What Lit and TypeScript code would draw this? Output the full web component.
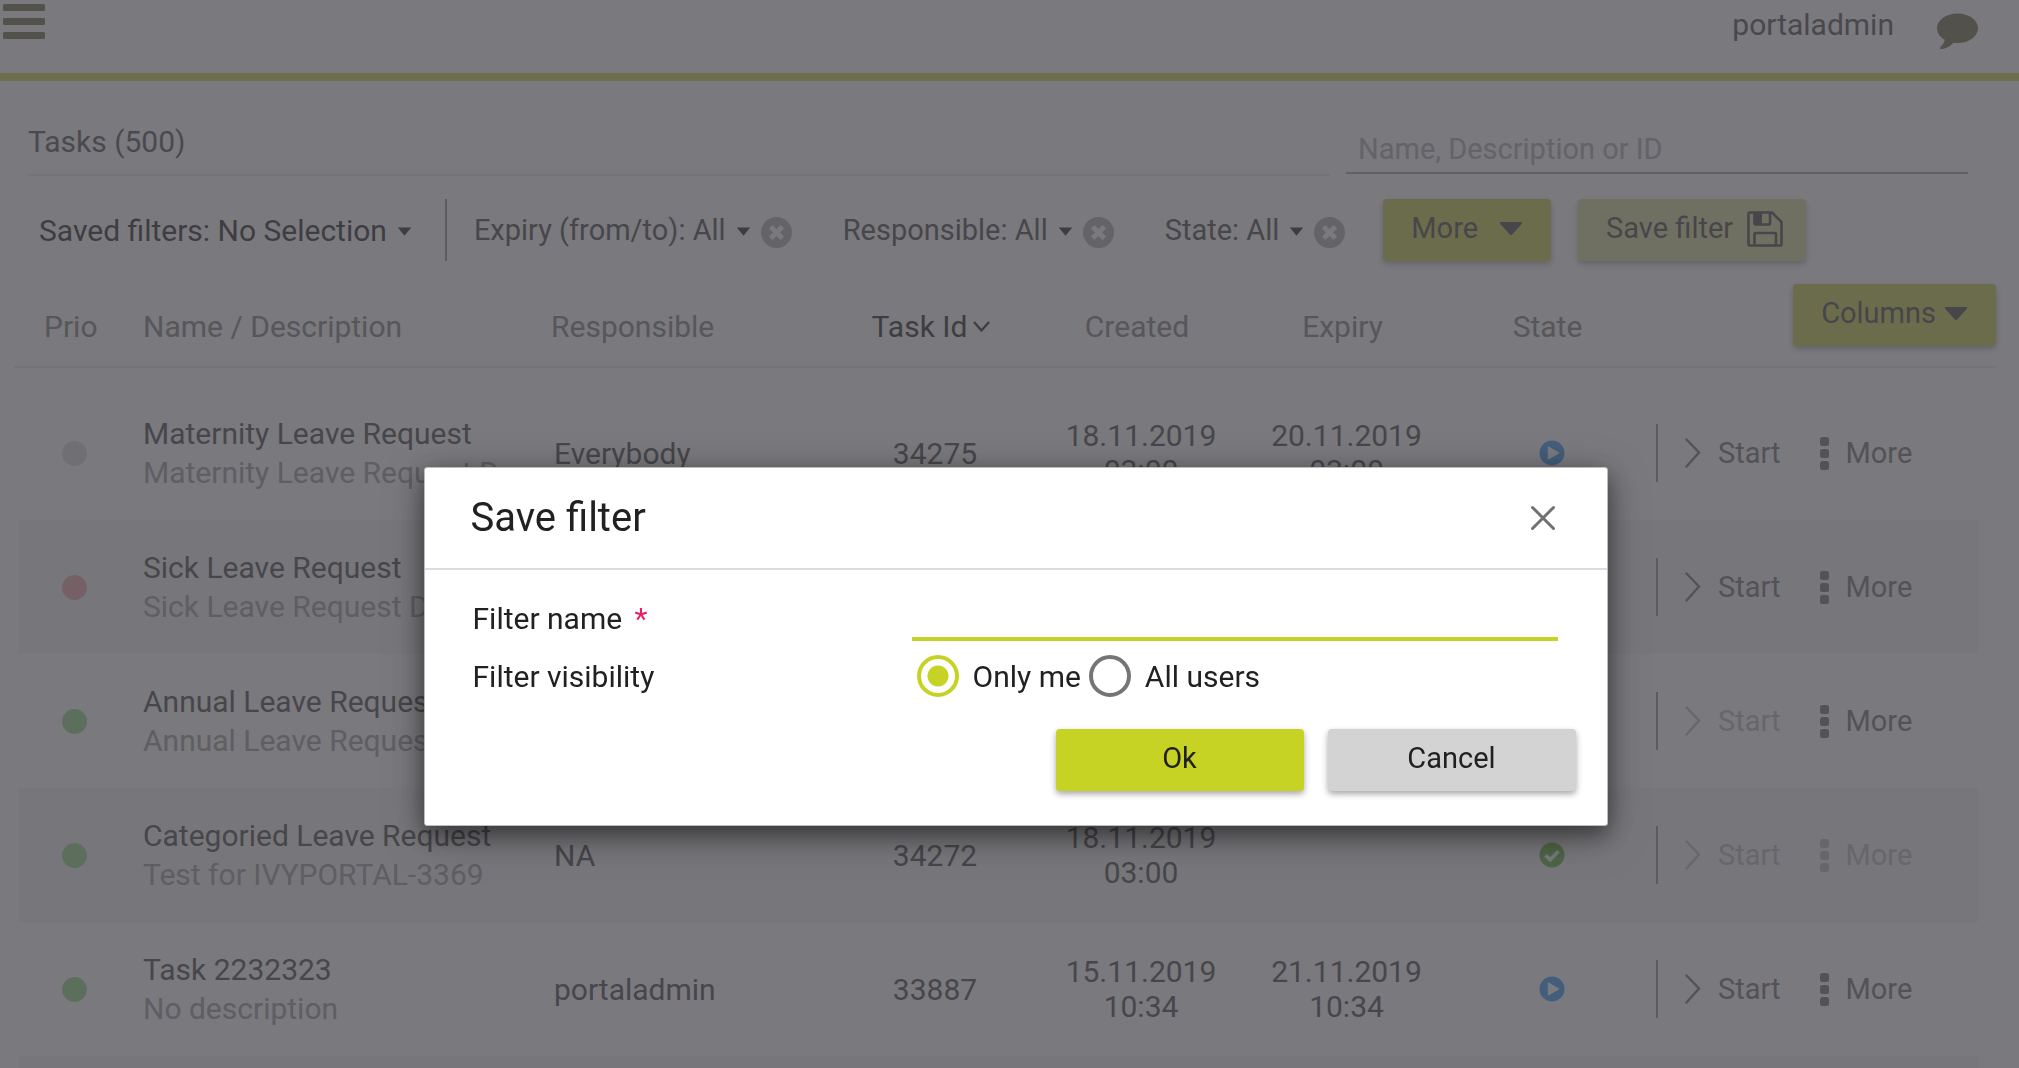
import { LitElement, html, css, svg, nothing } from "lit";
import { customElement, property, state } from "lit/decorators.js";
import { classMap } from "lit/directives/class-map.js";

interface Task {
  prio: "low" | "high" | "normal";
  name: string;
  description: string;
  responsible: string;
  id: string;
  created: [string, string];
  expiry?: [string, string];
  status: "open" | "done";
  canStart: boolean;
  canMore: boolean;
}

const TASKS: Task[] = [
  {
    prio: "low",
    name: "Maternity Leave Request",
    description: "Maternity Leave Request Description",
    responsible: "Everybody",
    id: "34275",
    created: ["18.11.2019", "03:00"],
    expiry: ["20.11.2019", "03:00"],
    status: "open",
    canStart: true,
    canMore: true,
  },
  {
    prio: "high",
    name: "Sick Leave Request",
    description: "Sick Leave Request Description",
    responsible: "Everybody",
    id: "34274",
    created: ["18.11.2019", "03:00"],
    expiry: ["20.11.2019", "03:00"],
    status: "open",
    canStart: true,
    canMore: true,
  },
  {
    prio: "normal",
    name: "Annual Leave Request",
    description: "Annual Leave Request Description",
    responsible: "Everybody",
    id: "34273",
    created: ["18.11.2019", "03:00"],
    expiry: ["20.11.2019", "03:00"],
    status: "open",
    canStart: false,
    canMore: true,
  },
  {
    prio: "normal",
    name: "Categoried Leave Request",
    description: "Test for IVYPORTAL-3369",
    responsible: "NA",
    id: "34272",
    created: ["18.11.2019", "03:00"],
    status: "done",
    canStart: false,
    canMore: false,
  },
  {
    prio: "normal",
    name: "Task 2232323",
    description: "No description",
    responsible: "portaladmin",
    id: "33887",
    created: ["15.11.2019", "10:34"],
    expiry: ["21.11.2019", "10:34"],
    status: "open",
    canStart: true,
    canMore: true,
  },
];

const FILTERS = ["Expiry (from/to): All", "Responsible: All", "State: All"];

const smallCaret = html`<svg class="caret" width="15" height="9" viewBox="0 0 15 9" aria-hidden="true">
  <path d="M0.8 0.5h13.4L7.5 8.8z" fill="currentColor" />
</svg>`;

const bigCaret = html`<svg width="24" height="15" viewBox="0 0 24 15" aria-hidden="true">
  <path d="M2 1h20c1 0 1.500 1 0.800 1.800l-9.600 10.800c-0.700 0.700-1.700 0.700-2.400 0L1.200 2.800C0.500 2 1 1 2 1z" fill="currentColor" />
</svg>`;

const floppy = html`<svg width="36" height="36" viewBox="0 0 36 36" fill="none" stroke="currentColor" stroke-width="2.600" aria-hidden="true">
  <path d="M2.500 1.500H25L34.500 11V33.500a1 1 0 0 1-1 1H2.500a1 1 0 0 1-1-1V2.500a1 1 0 0 1 1-1z" stroke-linejoin="round" />
  <path d="M7.500 2v10.500a1 1 0 0 0 1 1H22a1 1 0 0 0 1-1V2" />
  <path d="M7.500 2h7.500v12H7.500z" fill="currentColor" stroke="none" />
  <path d="M7.500 34V23a1 1 0 0 1 1-1H28a1 1 0 0 1 1 1V34" />
</svg>`;

const stateIcon = (kind: Task["status"]) => html`<svg
  class=${classMap({ status: true, [kind]: true })}
  width="26"
  height="26"
  viewBox="0 0 26 26"
  role="img"
  aria-label=${kind}
>
  <circle cx="13" cy="13" r="12.500" fill="currentColor" />
  ${kind === "open"
    ? svg`<path d="M9.300 6.800v12.400l10.700-6.200z" fill="#fff" stroke="#fff" stroke-linejoin="round" />`
    : svg`<path d="M6.500 13.200l4.600 4.600 8.400-8.600" fill="none" stroke="#fff" stroke-width="3.600" />`}
</svg>`;

@customElement("portal-task-row-actions")
export class TaskRowActions extends LitElement {
  @property({ type: Boolean }) start = false;
  @property({ type: Boolean }) more = false;

  static styles = css`
    :host {
      display: block;
    }
    .actions {
      display: flex;
      align-items: center;
      height: 58px;
      margin-left: 2px;
      padding-left: 27px;
      border-left: 2px solid #9c9c9c;
    }
    button {
      display: flex;
      align-items: center;
      padding: 0;
      border: 0;
      background: none;
      color: #7c7c7c;
      font: 29px/39px Roboto, sans-serif;
    }
    button:disabled {
      color: #c0c0c0;
    }
    .start {
      gap: 17px;
      margin-right: 39px;
    }
    .more {
      gap: 17px;
    }
  `;

  render() {
    return html`<div class="actions">
      <button class="start" type="button" ?disabled=${!this.start}>
        <svg width="16" height="30" viewBox="0 0 16 30" fill="none" stroke="currentColor" stroke-width="2.400" aria-hidden="true">
          <path d="M1.500 1.500L14 14.500L1.500 28.500" stroke-linecap="round" />
        </svg>
        Start
      </button>
      <button class="more" type="button" ?disabled=${!this.more}>
        <svg width="9" height="33" viewBox="0 0 9 33" fill="currentColor" aria-hidden="true">
          <rect width="9" height="9" rx="2.500" />
          <rect y="12" width="9" height="9" rx="2.500" />
          <rect y="24" width="9" height="9" rx="2.500" />
        </svg>
        More
      </button>
    </div>`;
  }
}

@customElement("portal-save-filter-dialog")
export class SaveFilterDialog extends LitElement {
  @state() private visibility = "me";

  static styles = css`
    :host {
      display: block;
      box-sizing: border-box;
      width: 1184px;
      max-width: 100%;
    }
    .dialog {
      border: 1px solid #bdbdbf;
      border-radius: 3px;
      background: #fff;
      color: #212121;
      font: 30px/39px Roboto, sans-serif;
      box-shadow: 0 10px 40px rgba(0, 0, 0, 0.35), 0 8px 20px rgba(0, 0, 0, 0.35);
    }
    header {
      display: flex;
      align-items: center;
      justify-content: space-between;
      height: 100px;
      padding: 0 51px 0 46px;
      border-bottom: 2px solid #dcdcdc;
    }
    h2 {
      margin: 0;
      font-size: 40px;
      font-weight: 400;
      line-height: 48px;
    }
    .close {
      display: flex;
      padding: 0;
      border: 0;
      background: none;
      color: #707070;
    }
    form {
      padding: 25px 31px 34px 48px;
    }
    .fields {
      display: grid;
      grid-template-columns: 439px 1fr;
      row-gap: 14px;
      align-items: center;
      margin-right: 18px;
    }
    .required {
      margin-left: 5px;
      color: #e91e63;
    }
    .name {
      box-sizing: border-box;
      width: 100%;
      height: 46px;
      padding: 0 4px;
      border: 0;
      border-bottom: 4px solid #c6d325;
      border-radius: 0;
      outline: none;
      background: none;
      color: inherit;
      font: inherit;
    }
    .choices {
      display: flex;
      align-items: center;
      gap: 8px;
      padding-left: 5px;
    }
    .choice {
      display: flex;
      align-items: center;
      gap: 14px;
    }
    .radio {
      appearance: none;
      box-sizing: border-box;
      width: 42px;
      height: 42px;
      margin: 0;
      border: 4px solid #757575;
      border-radius: 50%;
      background: #fff;
    }
    .radio:checked {
      border-color: #c6d325;
      background: radial-gradient(circle, #c6d325 10px, #fff 11px);
    }
    .buttons {
      display: flex;
      justify-content: flex-end;
      gap: 24px;
      margin-top: 32px;
    }
    .button {
      width: 248px;
      height: 62px;
      padding: 0 0 3px;
      border: 0;
      border-radius: 4px;
      background: #d3d3d3;
      color: #212121;
      font: 29px/39px Roboto, sans-serif;
      box-shadow: 0 3px 6px rgba(0, 0, 0, 0.35);
    }
    .primary {
      background: #c6d325;
    }
  `;

  private choice(value: string, label: string) {
    return html`<label class="choice">
      <input
        class="radio"
        type="radio"
        name="visibility"
        .value=${value}
        .checked=${this.visibility === value}
        @change=${() => (this.visibility = value)}
      />
      ${label}
    </label>`;
  }

  render() {
    return html`<section class="dialog" role="dialog" aria-modal="true" aria-labelledby="title">
      <header>
        <h2 id="title">Save filter</h2>
        <button class="close" type="button" aria-label="Close">
          <svg width="26" height="26" viewBox="0 0 26 26" fill="none" stroke="currentColor" stroke-width="3" stroke-linecap="round" aria-hidden="true">
            <path d="M2.500 2.500l21 21M23.500 2.500l-21 21" />
          </svg>
        </button>
      </header>
      <form @submit=${(e: Event) => e.preventDefault()}>
        <div class="fields">
          <label for="name">Filter name <span class="required">*</span></label>
          <input id="name" class="name" type="text" required />
          <span id="visibility">Filter visibility</span>
          <div class="choices" role="radiogroup" aria-labelledby="visibility">
            ${this.choice("me", "Only me")}${this.choice("all", "All users")}
          </div>
        </div>
        <div class="buttons">
          <button class="button primary" type="submit">Ok</button>
          <button class="button" type="button">Cancel</button>
        </div>
      </form>
    </section>`;
  }
}

@customElement("app-root")
export class AppRoot extends LitElement {
  static styles = css`
    :host {
      display: block;
      height: 100vh;
      overflow: hidden;
      background: #fff;
      color: #545454;
      font: 30px/39px Roboto, sans-serif;
    }
    button {
      padding: 0;
      border: 0;
      background: none;
      color: inherit;
      font: inherit;
    }
    .topbar {
      display: flex;
      justify-content: space-between;
      align-items: flex-start;
      height: 73px;
      border-bottom: 8px solid #d2da62;
      color: #78785a;
    }
    .menu {
      display: flex;
      padding: 4px 0 0 3px;
    }
    .account {
      display: flex;
      gap: 43px;
      padding: 5px 41px 0 0;
    }
    .user {
      color: #5c5c5c;
      text-decoration: none;
    }
    .chat {
      display: flex;
      padding-top: 8px;
    }
    .heading {
      display: grid;
      grid-template-columns: 1302fr 622fr;
      gap: 16px;
      padding: 41px 51px 0 28px;
    }
    h1 {
      margin: 0;
      padding-bottom: 13px;
      border-bottom: 2px solid #eaeaea;
      color: #606060;
      font-size: 30px;
      font-weight: 400;
    }
    .search {
      box-sizing: border-box;
      align-self: end;
      width: 100%;
      height: 46px;
      margin-bottom: 2px;
      padding: 0 12px 2px;
      border: 0;
      border-bottom: 2px solid #acacac;
      border-radius: 0;
      outline: none;
      background: none;
      color: inherit;
      font: 29px/39px Roboto, sans-serif;
    }
    .search::placeholder {
      color: #b4b4b4;
      opacity: 1;
    }
    .filters {
      display: flex;
      align-items: center;
      height: 62px;
      padding: 23px 0 0 39px;
      font-size: 29px;
    }
    .filter {
      display: flex;
      align-items: center;
      gap: 10px;
      white-space: nowrap;
    }
    .caret {
      margin-top: 3px;
      color: #383838;
    }
    .saved {
      padding-right: 33px;
      color: #383838;
      font-size: 30px;
    }
    .chips {
      display: flex;
      align-items: center;
      gap: 51px;
      height: 62px;
      padding: 0 38px 0 27px;
      border-left: 2px solid #9c9c9c;
    }
    .chip {
      display: flex;
      align-items: center;
      gap: 10px;
    }
    .clear {
      display: flex;
      padding-top: 5px;
      color: #b4b4b4;
    }
    .button {
      display: flex;
      align-items: center;
      height: 62px;
      padding: 0 28px 3px;
      border-radius: 4px;
      background: #ccd45c;
      color: #545454;
      font-size: 29px;
      box-shadow: 0 3px 6px rgba(0, 0, 0, 0.3);
    }
    .more {
      gap: 21px;
    }
    .save {
      gap: 14px;
      margin-left: 27px;
      padding-right: 23px;
      background: #dce2a6;
    }
    .columns {
      gap: 8px;
      margin-left: auto;
    }
    .tasks {
      padding: 10px 23px 0 14px;
    }
    table {
      width: 100%;
      border-collapse: separate;
      border-spacing: 0;
      table-layout: fixed;
    }
    .c-prio {
      width: 129px;
    }
    .c-responsible {
      width: 281px;
    }
    .c-id,
    .c-created {
      width: 206px;
    }
    .c-expiry,
    .c-state {
      width: 205px;
    }
    .c-actions {
      width: 342px;
    }
    th {
      height: 75px;
      padding: 0 0 20px;
      border-bottom: 2px solid #eaeaea;
      color: #8a8a8a;
      font-weight: 400;
      text-align: left;
      vertical-align: bottom;
    }
    th.prio {
      padding-left: 30px;
    }
    th.center {
      padding-right: 8px;
    }
    .center {
      text-align: center;
    }
    .sort {
      color: #383838;
    }
    .sort svg {
      margin-left: 6px;
    }
    tbody::before {
      content: "";
      display: table-row;
      height: 18px;
    }
    tbody tr:nth-child(even) {
      background: linear-gradient(#f6f6f6, #f6f6f6) no-repeat 4px 0 / calc(100% - 22px) 100%;
    }
    td {
      height: 134px;
      padding: 0;
      vertical-align: middle;
    }
    td.prio {
      padding-left: 48px;
    }
    .dot {
      display: block;
      width: 25px;
      height: 25px;
      border-radius: 50%;
    }
    .low {
      background: #dedede;
    }
    .high {
      background: #eeb0b0;
    }
    .normal {
      background: #9cdc94;
    }
    .name,
    .description {
      overflow: hidden;
      margin-right: 31px;
      text-overflow: ellipsis;
      white-space: nowrap;
    }
    .description {
      color: #a4a4a4;
    }
    td.responsible {
      padding-left: 3px;
    }
    .date {
      line-height: 35px;
    }
    .status {
      display: block;
      margin: 0 auto;
    }
    .open {
      color: #48a4f8;
    }
    .done {
      color: #70bc4c;
    }
    .overlay {
      position: fixed;
      inset: 0;
      display: flex;
      align-items: flex-start;
      justify-content: center;
      padding: 467px 0 0 12px;
      background: rgba(66, 64, 70, 0.7);
    }
  `;

  private row(t: Task) {
    return html`<tr>
      <td class="prio"><span class=${classMap({ dot: true, [t.prio]: true })}></span></td>
      <td>
        <div class="name">${t.name}</div>
        <div class="description">${t.description}</div>
      </td>
      <td class="responsible">${t.responsible}</td>
      <td class="center">${t.id}</td>
      <td class="center date">${t.created[0]}<br />${t.created[1]}</td>
      <td class="center date">${t.expiry ? html`${t.expiry[0]}<br />${t.expiry[1]}` : nothing}</td>
      <td>${stateIcon(t.status)}</td>
      <td>
        <portal-task-row-actions ?start=${t.canStart} ?more=${t.canMore}></portal-task-row-actions>
      </td>
    </tr>`;
  }

  render() {
    return html`
      <header class="topbar">
        <button class="menu" type="button" aria-label="Menu">
          <svg width="42" height="35" viewBox="0 0 42 35" fill="currentColor" aria-hidden="true">
            <rect width="42" height="7" rx="1.500" />
            <rect y="14" width="42" height="7" rx="1.500" />
            <rect y="28" width="42" height="7" rx="1.500" />
          </svg>
        </button>
        <div class="account">
          <a class="user" href="#">portaladmin</a>
          <button class="chat" type="button" aria-label="Chat">
            <svg width="41" height="37" viewBox="0 0 41 37" fill="currentColor" aria-hidden="true">
              <path d="M20.500 0.500C31.800 0.500 41 7 41 15.200S31.800 30 20.500 30c-1.400 0-2.700-0.100-4-0.300C13.500 33 9 35.800 4.500 36c-1.700 0.100-2-1-1.200-1.800C5.500 32 7 30 7.800 26.700 3 24 0 19.800 0 15.200 0 7 9.200 0.500 20.500 0.500z" />
            </svg>
          </button>
        </div>
      </header>
      <main>
        <div class="heading">
          <h1>Tasks (500)</h1>
          <input class="search" type="search" aria-label="Search tasks" placeholder="Name, Description or ID" />
        </div>
        <div class="filters">
          <button class="filter saved" type="button">Saved filters: No Selection ${smallCaret}</button>
          <div class="chips">
            ${FILTERS.map(
              (label) => html`<div class="chip">
                <button class="filter" type="button">${label} ${smallCaret}</button>
                <button class="clear" type="button" aria-label="Remove filter">
                  <svg width="31" height="31" viewBox="0 0 31 31" aria-hidden="true">
                    <circle cx="15.500" cy="15.500" r="15.500" fill="currentColor" />
                    <path d="M9.700 9.700l11.600 11.600M21.300 9.700L9.700 21.300" stroke="#fff" stroke-width="5" />
                  </svg>
                </button>
              </div>`,
            )}
          </div>
          <button class="button more" type="button">More ${bigCaret}</button>
          <button class="button save" type="button">Save filter ${floppy}</button>
        </div>
        <section class="tasks">
          <table>
            <colgroup>
              <col class="c-prio" />
              <col />
              <col class="c-responsible" />
              <col class="c-id" />
              <col class="c-created" />
              <col class="c-expiry" />
              <col class="c-state" />
              <col class="c-actions" />
            </colgroup>
            <thead>
              <tr>
                <th class="prio">Prio</th>
                <th>Name / Description</th>
                <th>Responsible</th>
                <th class="center">
                  <button class="sort" type="button">Task Id<svg width="17" height="16" viewBox="0 0 17 16" fill="none" stroke="currentColor" stroke-width="2.400" aria-hidden="true">
                      <path d="M1 1l7.500 8.500L16 1" />
                    </svg></button>
                </th>
                <th class="center">Created</th>
                <th class="center">Expiry</th>
                <th class="center">State</th>
                <th><button class="button columns" type="button">Columns ${bigCaret}</button></th>
              </tr>
            </thead>
            <tbody>
              ${TASKS.map((t) => this.row(t))}
              <tr>
                <td colspan="8"></td>
              </tr>
            </tbody>
          </table>
        </section>
      </main>
      <div class="overlay">
        <portal-save-filter-dialog></portal-save-filter-dialog>
      </div>
    `;
  }
}
